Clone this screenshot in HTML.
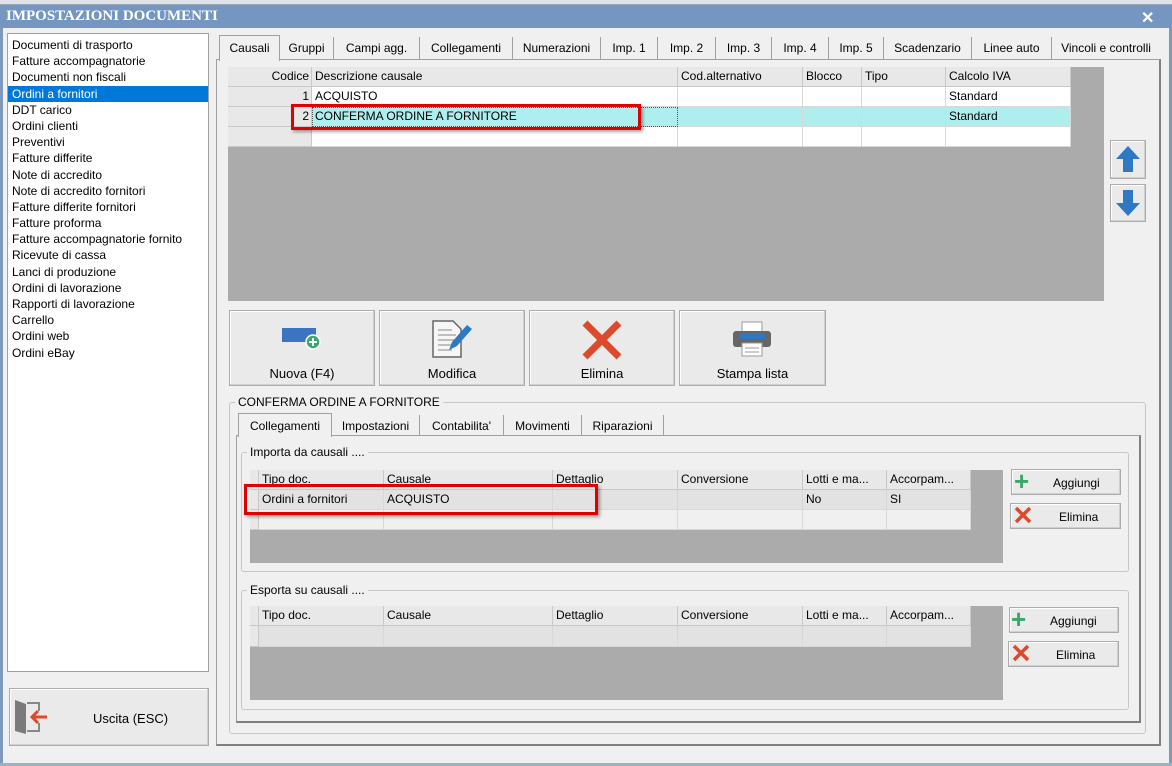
<!DOCTYPE html>
<html><head><meta charset="utf-8"><style>
*{box-sizing:border-box;margin:0;padding:0}
body{width:1172px;height:766px;overflow:hidden;background:#f0f0f0;font-family:"Liberation Sans",sans-serif;font-size:12px;color:#000;position:relative}
.a{position:absolute}
.tb{left:0;top:0;width:1172px;height:5px;background:#dfe3e8;border-bottom:1px solid #9aa8b8}
.title{left:0;top:5px;width:1172px;height:23px;background:#7596c0;color:#fff;font-family:"Liberation Serif",serif;font-weight:bold;font-size:15px;line-height:23px;padding-left:6px}
.frameL{left:0;top:28px;width:3px;height:738px;background:#7f99ba}
.frameR{right:0;top:28px;width:3px;height:738px;background:#7f99ba}
.frameB{left:0;top:763px;width:1172px;height:3px;background:#9fb0c6}
.list{left:7px;top:33px;width:202px;height:639px;background:#fff;border:1px solid #a0a0a0}
.list div{height:16.2px;line-height:16px;padding-left:4px;white-space:nowrap;overflow:hidden}
.list .sel{background:#0078d7;color:#fff}
.btn{background:#eaeaea;border:1px solid #acacac;box-shadow:inset -1px -1px 0 #d0d0d0,inset 1px 1px 0 #fff}
.tab{top:37px;height:23px;line-height:22px;text-align:center;border-right:1px solid #a0a0a0;white-space:nowrap;overflow:hidden}
.panel{border:1px solid #a0a0a0;background:#f0f0f0}
.grid{background:#ababab}
.c{position:absolute;height:20px;line-height:19px;padding-left:3px;border-right:1px solid #d8d8d8;border-bottom:1px solid #d8d8d8;white-space:nowrap;overflow:hidden}
.h{background:#e8e8e8;border-right:1px solid #c8c8c8;border-bottom:1px solid #c8c8c8}
.w{background:#fff}
.cy{background:#aeeeee}
.g{background:#e2e2e2}
.grp{border:1px solid #c6c6c6;border-radius:3px}
.lg{background:#f0f0f0;padding:0 3px;line-height:14px}
.red{border:3px solid #e00000;box-shadow:2px 2px 3px rgba(0,0,0,.35)}
</style></head><body>
<div class="a tb"></div>
<div class="a title">IMPOSTAZIONI DOCUMENTI</div>
<div class="a" style="left:1141px;top:8px;color:#fff;font-weight:bold;font-size:16px">✕</div>
<div class="a frameL"></div><div class="a frameR"></div><div class="a frameB"></div>

<div class="a list">
<div style="margin-top:3px">Documenti di trasporto</div><div>Fatture accompagnatorie</div><div>Documenti non fiscali</div><div class="sel">Ordini a fornitori</div><div>DDT carico</div><div>Ordini clienti</div><div>Preventivi</div><div>Fatture differite</div><div>Note di accredito</div><div>Note di accredito fornitori</div><div>Fatture differite fornitori</div><div>Fatture proforma</div><div>Fatture accompagnatorie fornito</div><div>Ricevute di cassa</div><div>Lanci di produzione</div><div>Ordini di lavorazione</div><div>Rapporti di lavorazione</div><div>Carrello</div><div>Ordini web</div><div>Ordini eBay</div>
</div>

<div class="a btn" style="left:9px;top:688px;width:200px;height:58px"></div>
<svg class="a" style="left:13px;top:697px" width="36" height="40" viewBox="0 0 36 40"><path d="M14 6h12v8M26 26v8H14" stroke="#888" stroke-width="2" fill="none"/><path d="M2 3l11 4v30l-11-3z" fill="#7a7a7a"/><path d="M34 20H20M25 14l-6 6 6 6" stroke="#e04a2a" stroke-width="3" fill="none"/></svg>
<div class="a" style="left:93px;top:711px;font-size:13px">Uscita (ESC)</div>

<!-- main panel -->
<div class="a panel" style="left:216px;top:59px;width:945px;height:687px;border-bottom:2px solid #808080;border-right:2px solid #808080"></div>
<div class="a" style="left:219px;top:35px;width:61px;height:26px;background:#f0f0f0;border:1px solid #a0a0a0;border-bottom:none;line-height:25px;text-align:center">Causali</div>
<div class="a tab" style="left:280px;width:54px">Gruppi</div>
<div class="a tab" style="left:334px;width:86px">Campi agg.</div>
<div class="a tab" style="left:420px;width:93px">Collegamenti</div>
<div class="a tab" style="left:513px;width:88px">Numerazioni</div>
<div class="a tab" style="left:601px;width:57px">Imp. 1</div>
<div class="a tab" style="left:658px;width:58px">Imp. 2</div>
<div class="a tab" style="left:716px;width:56px">Imp. 3</div>
<div class="a tab" style="left:772px;width:57px">Imp. 4</div>
<div class="a tab" style="left:829px;width:55px">Imp. 5</div>
<div class="a tab" style="left:884px;width:88px">Scadenzario</div>
<div class="a tab" style="left:972px;width:80px">Linee auto</div>
<div class="a tab" style="left:1052px;width:108px;border-right:none">Vincoli e controlli</div>

<!-- top grid -->
<div class="a grid" style="left:228px;top:67px;width:876px;height:234px"></div>
<div class="c h" style="left:228px;top:67px;width:84px;text-align:right;padding-right:2px">Codice</div>
<div class="c h" style="left:312px;top:67px;width:366px">Descrizione causale</div>
<div class="c h" style="left:678px;top:67px;width:125px">Cod.alternativo</div>
<div class="c h" style="left:803px;top:67px;width:59px">Blocco</div>
<div class="c h" style="left:862px;top:67px;width:84px">Tipo</div>
<div class="c h" style="left:946px;top:67px;width:125px">Calcolo IVA</div>
<div class="c h" style="left:228px;top:87px;width:84px;text-align:right;padding-right:2px">1</div>
<div class="c w" style="left:312px;top:87px;width:366px">ACQUISTO</div>
<div class="c w" style="left:678px;top:87px;width:125px"></div><div class="c w" style="left:803px;top:87px;width:59px"></div><div class="c w" style="left:862px;top:87px;width:84px"></div>
<div class="c w" style="left:946px;top:87px;width:125px">Standard</div>
<div class="c h" style="left:228px;top:107px;width:84px;text-align:right;padding-right:2px">2</div>
<div class="c cy" style="left:312px;top:107px;width:366px;outline:1px dotted #555;outline-offset:-1px">CONFERMA ORDINE A FORNITORE</div>
<div class="c cy" style="left:678px;top:107px;width:125px"></div><div class="c cy" style="left:803px;top:107px;width:59px"></div><div class="c cy" style="left:862px;top:107px;width:84px"></div>
<div class="c cy" style="left:946px;top:107px;width:125px">Standard</div>
<div class="c h" style="left:228px;top:127px;width:84px"></div>
<div class="c w" style="left:312px;top:127px;width:366px"></div><div class="c w" style="left:678px;top:127px;width:125px"></div><div class="c w" style="left:803px;top:127px;width:59px"></div><div class="c w" style="left:862px;top:127px;width:84px"></div><div class="c w" style="left:946px;top:127px;width:125px"></div>
<div class="a red" style="left:291px;top:104px;width:350px;height:26px"></div>

<div class="a btn" style="left:1110px;top:140px;width:36px;height:39px"></div>
<svg class="a" style="left:1114px;top:144px" width="28" height="30"><path d="M14 2L26 15H19V28H9V15H2z" fill="#2f78c4"/></svg>
<div class="a btn" style="left:1110px;top:184px;width:36px;height:38px"></div>
<svg class="a" style="left:1114px;top:188px" width="28" height="30"><path d="M14 28L26 15H19V2H9V15H2z" fill="#2f78c4"/></svg>

<!-- big buttons -->
<div class="a btn" style="left:229px;top:310px;width:146px;height:76px"></div>
<div class="a btn" style="left:379px;top:310px;width:146px;height:76px"></div>
<div class="a btn" style="left:529px;top:310px;width:146px;height:76px"></div>
<div class="a btn" style="left:679px;top:310px;width:147px;height:76px"></div>
<svg class="a" style="left:280px;top:325px" width="44" height="26"><rect x="2" y="3" width="34" height="14" fill="#3b74c0"/><circle cx="33" cy="17" r="7" fill="#3aa86a" stroke="#fff" stroke-width="1.5"/><path d="M33 13v8M29 17h8" stroke="#fff" stroke-width="2"/></svg>
<svg class="a" style="left:429px;top:318px" width="46" height="42"><path d="M4 3h20l8 8v28H4z" fill="#f6f6f6" stroke="#666" stroke-width="1.5"/><path d="M9 12h14M9 17h18M9 22h16M9 27h18M9 32h14" stroke="#888"/><path d="M20 32l3-8 15-17 5 4-15 17z" fill="#2f78c4"/></svg>
<svg class="a" style="left:581px;top:319px" width="42" height="42"><path d="M4 4L38 38M38 4L4 38" stroke="#db4a2d" stroke-width="7"/></svg>
<svg class="a" style="left:731px;top:320px" width="42" height="38"><rect x="11" y="2" width="20" height="10" fill="#fff" stroke="#999"/><rect x="2" y="11" width="38" height="16" rx="3" fill="#666"/><rect x="8" y="13" width="26" height="6" fill="#2f78c4"/><rect x="11" y="23" width="20" height="13" fill="#fff" stroke="#999"/><path d="M14 28h14M14 32h14" stroke="#999"/></svg>
<div class="a" style="left:229px;top:366px;width:146px;text-align:center;font-size:13px">Nuova (F4)</div>
<div class="a" style="left:379px;top:366px;width:146px;text-align:center;font-size:13px">Modifica</div>
<div class="a" style="left:529px;top:366px;width:146px;text-align:center;font-size:13px">Elimina</div>
<div class="a" style="left:679px;top:366px;width:147px;text-align:center;font-size:13px">Stampa lista</div>

<!-- lower group -->
<div class="a grp" style="left:229px;top:402px;width:917px;height:332px"></div>
<div class="a lg" style="left:235px;top:395px">CONFERMA ORDINE A FORNITORE</div>
<div class="a panel" style="left:236px;top:435px;width:905px;height:288px;border-bottom:2px solid #808080;border-right:2px solid #808080"></div>
<div class="a" style="left:238px;top:413px;width:94px;height:24px;background:#f0f0f0;border:1px solid #a0a0a0;border-bottom:none;line-height:24px;text-align:center">Collegamenti</div>
<div class="a tab" style="left:332px;top:415px;width:88px;height:21px;line-height:22px">Impostazioni</div>
<div class="a tab" style="left:420px;top:415px;width:84px;height:21px;line-height:22px">Contabilita'</div>
<div class="a tab" style="left:504px;top:415px;width:78px;height:21px;line-height:22px">Movimenti</div>
<div class="a tab" style="left:582px;top:415px;width:82px;height:21px;line-height:22px">Riparazioni</div>

<div class="a grp" style="left:241px;top:452px;width:888px;height:120px"></div>
<div class="a lg" style="left:247px;top:445px">Importa da causali ....</div>
<div class="a grid" style="left:250px;top:470px;width:753px;height:93px"></div>
<div class="c h" style="left:250px;top:470px;width:9px"></div>
<div class="c h" style="left:259px;top:470px;width:125px">Tipo doc.</div>
<div class="c h" style="left:384px;top:470px;width:169px">Causale</div>
<div class="c h" style="left:553px;top:470px;width:125px">Dettaglio</div>
<div class="c h" style="left:678px;top:470px;width:125px">Conversione</div>
<div class="c h" style="left:803px;top:470px;width:84px">Lotti e ma...</div>
<div class="c h" style="left:887px;top:470px;width:84px">Accorpam...</div>
<div class="c h" style="left:250px;top:490px;width:9px"></div>
<div class="c g" style="left:259px;top:490px;width:125px">Ordini a fornitori</div>
<div class="c g" style="left:384px;top:490px;width:169px">ACQUISTO</div>
<div class="c g" style="left:553px;top:490px;width:125px"></div><div class="c g" style="left:678px;top:490px;width:125px"></div>
<div class="c g" style="left:803px;top:490px;width:84px">No</div>
<div class="c g" style="left:887px;top:490px;width:84px">SI</div>
<div class="c h" style="left:250px;top:510px;width:9px"></div>
<div class="c" style="left:259px;top:510px;width:125px;background:#f0f0f0"></div><div class="c" style="left:384px;top:510px;width:169px;background:#f0f0f0"></div><div class="c" style="left:553px;top:510px;width:125px;background:#f0f0f0"></div><div class="c" style="left:678px;top:510px;width:125px;background:#f0f0f0"></div><div class="c" style="left:803px;top:510px;width:84px;background:#f0f0f0"></div><div class="c" style="left:887px;top:510px;width:84px;background:#f0f0f0"></div>
<div class="a red" style="left:244px;top:484px;width:354px;height:31px"></div>
<div class="a btn" style="left:1011px;top:469px;width:110px;height:26px"></div>
<div class="a" style="left:1014px;top:468px;color:#3aa86a;font-size:26px;font-weight:bold;line-height:26px">+</div>
<div class="a" style="left:1053px;top:476px">Aggiungi</div>
<div class="a btn" style="left:1010px;top:503px;width:111px;height:26px"></div>
<svg class="a" style="left:1014px;top:506px" width="18" height="18"><path d="M2 2L16 16M16 2L2 16" stroke="#db4a2d" stroke-width="3.5"/></svg>
<div class="a" style="left:1059px;top:510px">Elimina</div>

<div class="a grp" style="left:241px;top:590px;width:888px;height:120px"></div>
<div class="a lg" style="left:247px;top:583px">Esporta su causali ....</div>
<div class="a grid" style="left:250px;top:606px;width:753px;height:94px"></div>
<div class="c h" style="left:250px;top:606px;width:9px"></div>
<div class="c h" style="left:259px;top:606px;width:125px">Tipo doc.</div>
<div class="c h" style="left:384px;top:606px;width:169px">Causale</div>
<div class="c h" style="left:553px;top:606px;width:125px">Dettaglio</div>
<div class="c h" style="left:678px;top:606px;width:125px">Conversione</div>
<div class="c h" style="left:803px;top:606px;width:84px">Lotti e ma...</div>
<div class="c h" style="left:887px;top:606px;width:84px">Accorpam...</div>
<div class="c h" style="left:250px;top:626px;width:9px;height:21px"></div>
<div class="c g" style="left:259px;top:626px;width:125px;height:21px"></div><div class="c g" style="left:384px;top:626px;width:169px;height:21px"></div><div class="c g" style="left:553px;top:626px;width:125px;height:21px"></div><div class="c g" style="left:678px;top:626px;width:125px;height:21px"></div><div class="c g" style="left:803px;top:626px;width:84px;height:21px"></div><div class="c g" style="left:887px;top:626px;width:84px;height:21px"></div>
<div class="a btn" style="left:1009px;top:607px;width:110px;height:26px"></div>
<div class="a" style="left:1011px;top:606px;color:#3aa86a;font-size:26px;font-weight:bold;line-height:26px">+</div>
<div class="a" style="left:1050px;top:614px">Aggiungi</div>
<div class="a btn" style="left:1008px;top:641px;width:111px;height:26px"></div>
<svg class="a" style="left:1012px;top:644px" width="18" height="18"><path d="M2 2L16 16M16 2L2 16" stroke="#db4a2d" stroke-width="3.5"/></svg>
<div class="a" style="left:1056px;top:648px">Elimina</div>
</body></html>
